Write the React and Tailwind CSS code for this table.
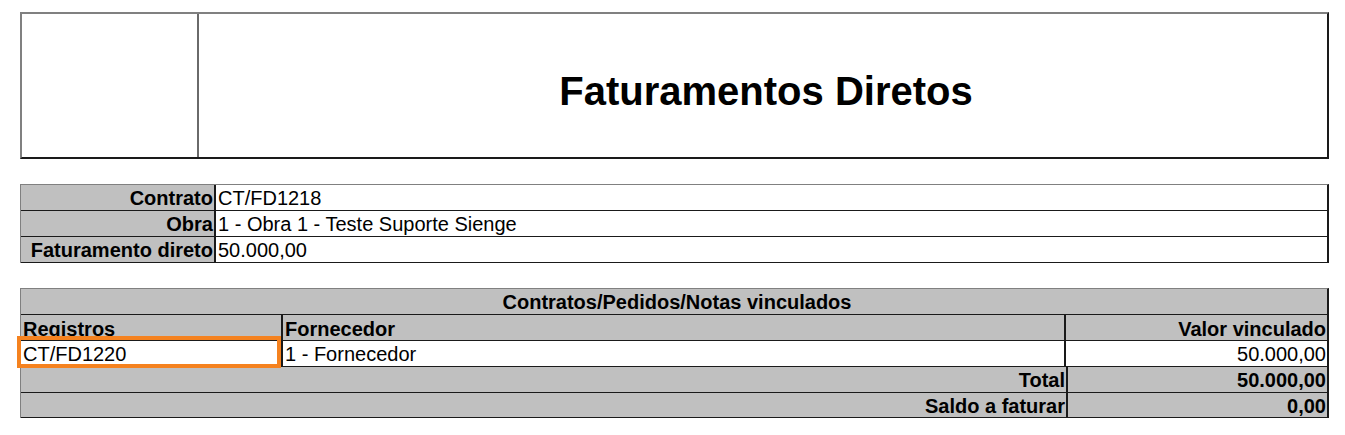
const cellBorder = "border-b border-[#1a1a1a]";

function InfoRow({ label, value }) {
  return (
    <div className={`flex h-[26px] ${cellBorder}`}>
      <div className="w-[195px] shrink-0 bg-[#c0c0c0] border-r-2 border-[#1a1a1a] text-right font-bold pr-[1px] leading-[26px]">
        {label}
      </div>
      <div className="flex-1 bg-white pl-[2px] leading-[26px]">{value}</div>
    </div>
  );
}

function App() {
  return (
    <div
      className="bg-white w-[1345px] h-[435px] pt-[12px] pl-[20px] text-black text-[20px]"
      style={{ fontFamily: '"Liberation Sans", Arial, sans-serif' }}
    >
      <div className="w-[1309px]">
        {/* cabeçalho */}
        <div className="flex h-[147px] border-t-2 border-l-2 border-t-[#808080] border-l-[#808080] border-b-2 border-r-2 border-b-[#1a1a1a] border-r-[#1a1a1a]">
          <div className="w-[177px] shrink-0 border-r-2 border-[#6a6a6a]" />
          <div className="flex-1 flex items-center justify-center">
            <h1 className="text-[40px] font-bold pt-[10px] pl-[6px]">Faturamentos Diretos</h1>
          </div>
        </div>

        {/* dados do contrato */}
        <div className="mt-[25px] border-t border-l border-t-[#808080] border-l-[#808080] border-r-2 border-r-[#1a1a1a]">
          <InfoRow label="Contrato" value="CT/FD1218" />
          <InfoRow label="Obra" value="1 - Obra 1 - Teste Suporte Sienge" />
          <InfoRow label="Faturamento direto" value="50.000,00" />
        </div>

        {/* vinculados */}
        <div className="mt-[25px] border-t border-l border-t-[#808080] border-l-[#808080] border-r-2 border-r-[#1a1a1a] bg-[#c0c0c0]">
          <div className={`h-[26px] text-center font-bold leading-[26px] pl-[6px] ${cellBorder}`}>
            Contratos/Pedidos/Notas vinculados
          </div>
          <div className={`flex h-[26px] font-bold leading-[28px] ${cellBorder}`}>
            <div className="w-[262px] shrink-0 border-r-2 border-[#1a1a1a] pl-[2px]">Registros</div>
            <div className="w-[783px] shrink-0 border-r-2 border-[#1a1a1a] pl-[2px]">Fornecedor</div>
            <div className="flex-1 text-right pr-[1px]">Valor vinculado</div>
          </div>
          <div className={`flex h-[26px] leading-[26px] bg-white ${cellBorder}`}>
            <div className="relative w-[262px] shrink-0 border-r-2 border-[#1a1a1a] pl-[2px]">
              CT/FD1220
              <div className="absolute left-[-4px] top-[-5px] w-[264px] h-[32px] border-[4px] border-[#f5821f]" />
            </div>
            <div className="w-[783px] shrink-0 border-r-2 border-[#1a1a1a] pl-[2px]">1 - Fornecedor</div>
            <div className="flex-1 text-right pr-[1px]">50.000,00</div>
          </div>
          <div className={`flex h-[26px] font-bold leading-[26px] ${cellBorder}`}>
            <div className="w-[1047px] shrink-0 border-r-2 border-[#1a1a1a] text-right pr-[1px]">Total</div>
            <div className="flex-1 text-right pr-[1px]">50.000,00</div>
          </div>
          <div className={`flex h-[25px] font-bold leading-[26px] ${cellBorder}`}>
            <div className="w-[1047px] shrink-0 border-r-2 border-[#1a1a1a] text-right pr-[1px]">Saldo a faturar</div>
            <div className="flex-1 text-right pr-[1px]">0,00</div>
          </div>
        </div>
      </div>
    </div>
  );
}

export default App;
